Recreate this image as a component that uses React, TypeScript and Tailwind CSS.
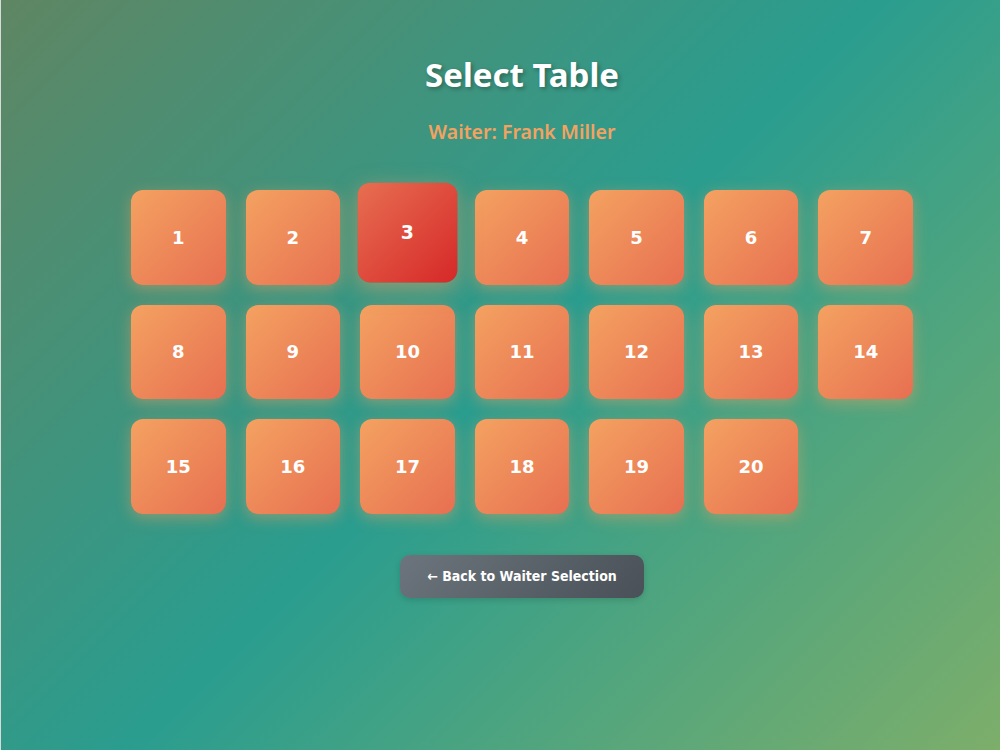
import React from "react";

export default function App() {
  const tables = Array.from({ length: 20 }, (_, i) => i + 1);
  const selected = 3;
  return (
    <div className="w-[1000px] h-[750px] overflow-hidden border-l border-[#d8dcd8] bg-[linear-gradient(135deg,#5f8663_0%,#2a9d8f_50%,#7dae6a_100%)]">
      <div className="flex flex-col items-center pl-[43px] pt-[55px]">
        <h1 className="font-['Noto_Sans','Open_Sans',sans-serif] text-[33px] leading-[40px] font-bold text-white [text-shadow:2px_2px_4px_rgba(0,0,0,0.3)]">
          Select Table
        </h1>
        <p className="mt-[23px] font-['Noto_Sans','Open_Sans',sans-serif] text-[19.5px] leading-[28px] font-semibold text-[#f4a261]">
          Waiter: Frank Miller
        </p>
        <div className="mt-[44px] grid w-[782px] grid-cols-7 gap-5">
          {tables.map((n) => (
            <button
              key={n}
              className={
                n === selected
                  ? "aspect-square rounded-[12px] bg-[linear-gradient(135deg,#e76f51,#d62828)] text-white font-['DejaVu_Sans',sans-serif] font-bold text-[18px] shadow-[0_6px_20px_rgba(244,162,97,0.5)] -translate-y-[5px] scale-105"
                  : "aspect-square rounded-[12px] bg-[linear-gradient(135deg,#f4a261,#e76f51)] text-white font-['DejaVu_Sans',sans-serif] font-bold text-[18px] shadow-[0_4px_15px_rgba(244,162,97,0.45)]"
              }
            >
              {n}
            </button>
          ))}
        </div>
        <button className="mt-[41px] h-[43px] w-[244px] rounded-[10px] bg-[linear-gradient(135deg,#6c757d,#495057)] text-white font-['DejaVu_Sans_Condensed','DejaVu_Sans',sans-serif] font-bold text-[14px] shadow-[0_2px_6px_rgba(0,0,0,0.15)]">
          ← Back to Waiter Selection
        </button>
      </div>
    </div>
  );
}
